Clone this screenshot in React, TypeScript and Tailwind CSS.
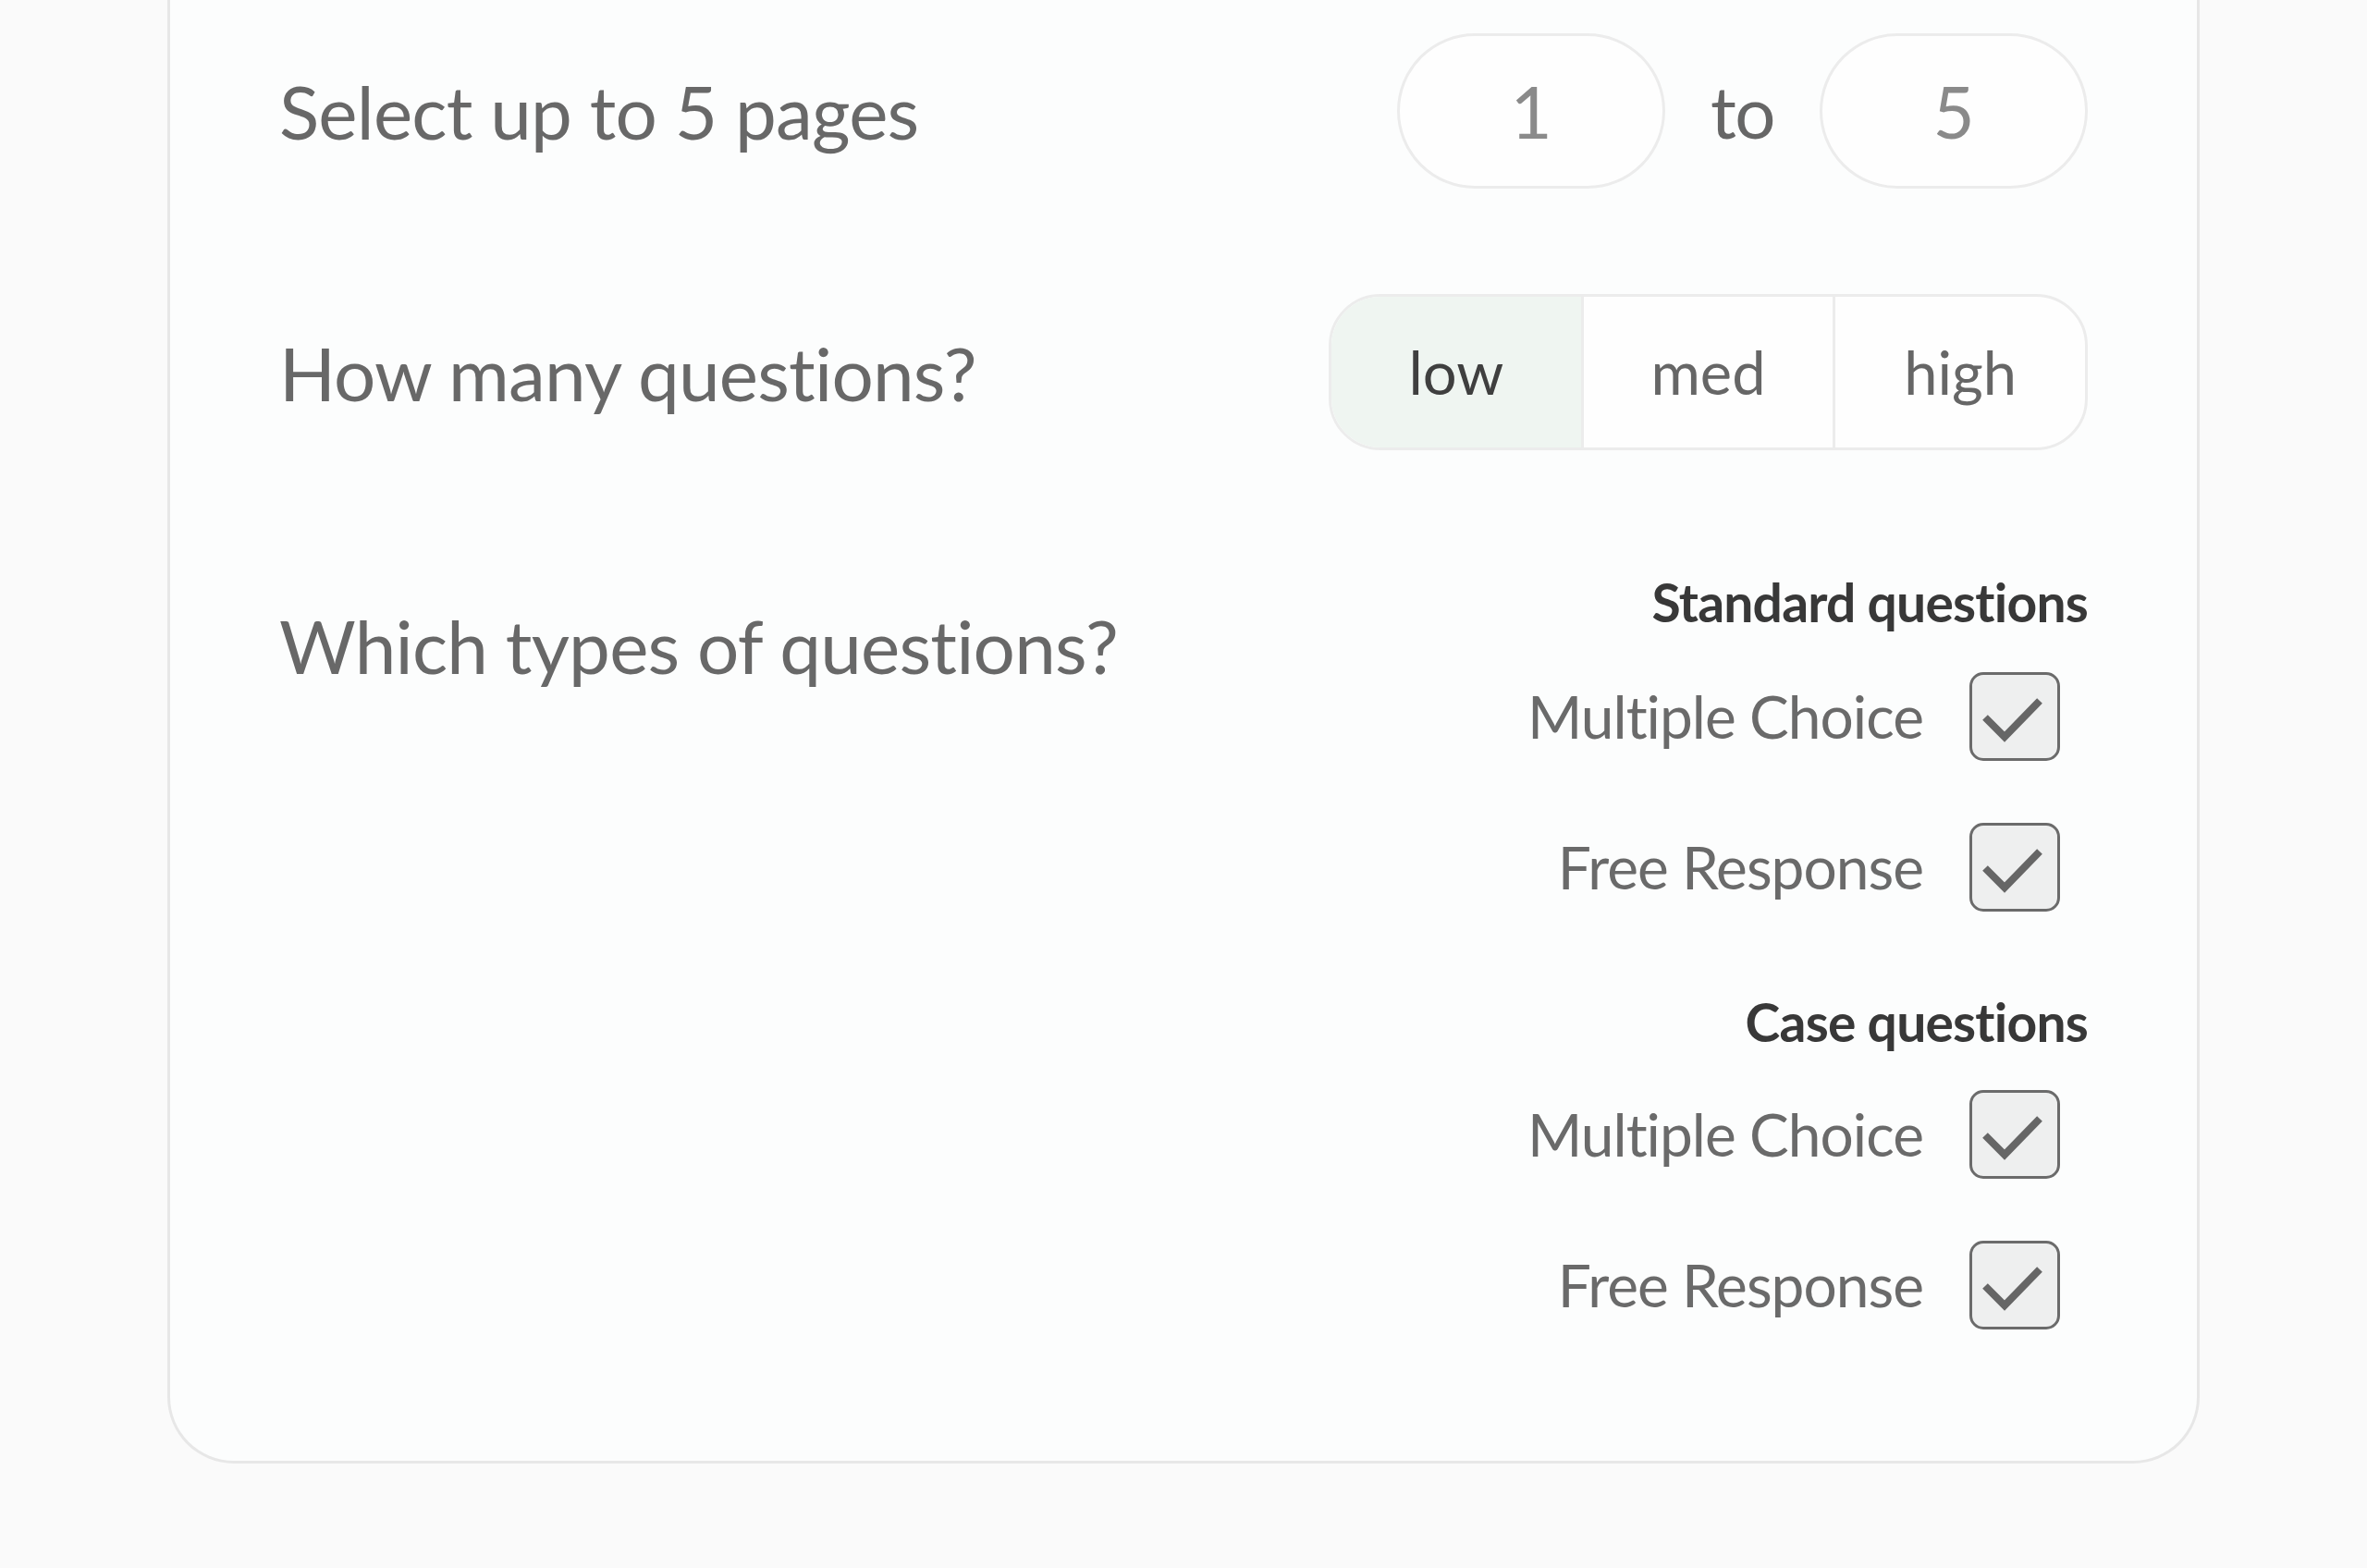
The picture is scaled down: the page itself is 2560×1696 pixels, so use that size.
import React from "react";

const LABEL = "text-[80px] leading-none tracking-[-0.8px] text-[#686868]";

function Checkbox() {
  return (
    <div className="flex h-[96px] w-[98px] items-center justify-center rounded-[15px] border-[3px] border-[#6b6b6b] bg-[#eeefef]">
      <svg width="92" height="90" viewBox="0 0 92 90" fill="none">
        <polyline points="14,46 35,67 73,28" stroke="#666666" strokeWidth="8" strokeLinejoin="miter" />
      </svg>
    </div>
  );
}

function CheckRow({ label }: { label: string }) {
  return (
    <div className="flex items-center gap-[50px]">
      <span className="text-[64px] leading-none tracking-[-1px] text-[#6a6a6a]">{label}</span>
      <Checkbox />
    </div>
  );
}

export default function App() {
  const levels = ["low", "med", "high"];
  const active = "low";

  return (
    <div className="min-h-screen bg-[#fafafa] font-['Lato',sans-serif]">
      <div className="mx-auto w-[2198px] rounded-b-[72px] border-x-[3px] border-b-[3px] border-[#e7e7e7] bg-[#fcfdfd] px-[118px] pt-[36px] pb-[142px]">
        {/* Page range */}
        <div className="flex h-[168px] items-center justify-between">
          <span className={LABEL}>Select up to 5 pages</span>
          <div className="flex items-center gap-[49px]">
            <div className="flex h-[168px] w-[290px] items-center justify-center rounded-full border-[3px] border-[#ececec] bg-[#fefefe] text-[78px] leading-none text-[#8a8a8a]">
              1
            </div>
            <span className="text-[78px] leading-none tracking-[-1.5px] text-[#666666]">to</span>
            <div className="flex h-[168px] w-[290px] items-center justify-center rounded-full border-[3px] border-[#ececec] bg-[#fefefe] text-[78px] leading-none text-[#8a8a8a]">
              5
            </div>
          </div>
        </div>

        {/* Question count */}
        <div className="mt-[114px] flex items-center justify-between">
          <span className={LABEL}>How many questions?</span>
          <div className="flex h-[169px] w-[821px] divide-x-[3px] divide-[#ececec] overflow-hidden rounded-[56px] border-[3px] border-[#ececec] bg-[#fefefe]">
            {levels.map((l) => (
              <div
                key={l}
                className={`flex flex-1 items-center justify-center text-[65px] leading-none ${
                  l === active ? "bg-[#eff5f1] text-[#3f3f3f]" : "text-[#666666]"
                }`}
              >
                {l}
              </div>
            ))}
          </div>
        </div>

        {/* Question types */}
        <div className="mt-[136px] flex items-start justify-between">
          <span className={`${LABEL} mt-[35px]`}>Which types of questions?</span>
          <div className="flex flex-col items-end">
            <span className="text-[57px] font-bold leading-none tracking-[-0.8px] text-[#383838]">Standard questions</span>
            <div className="mt-[47px] flex flex-col items-end gap-[67px] pr-[30px]">
              <CheckRow label="Multiple Choice" />
              <CheckRow label="Free Response" />
            </div>
            <span className="mt-[91px] text-[57px] font-bold leading-none tracking-[-0.8px] text-[#383838]">Case questions</span>
            <div className="mt-[45px] flex flex-col items-end gap-[67px] pr-[30px]">
              <CheckRow label="Multiple Choice" />
              <CheckRow label="Free Response" />
            </div>
          </div>
        </div>
      </div>
    </div>
  );
}
